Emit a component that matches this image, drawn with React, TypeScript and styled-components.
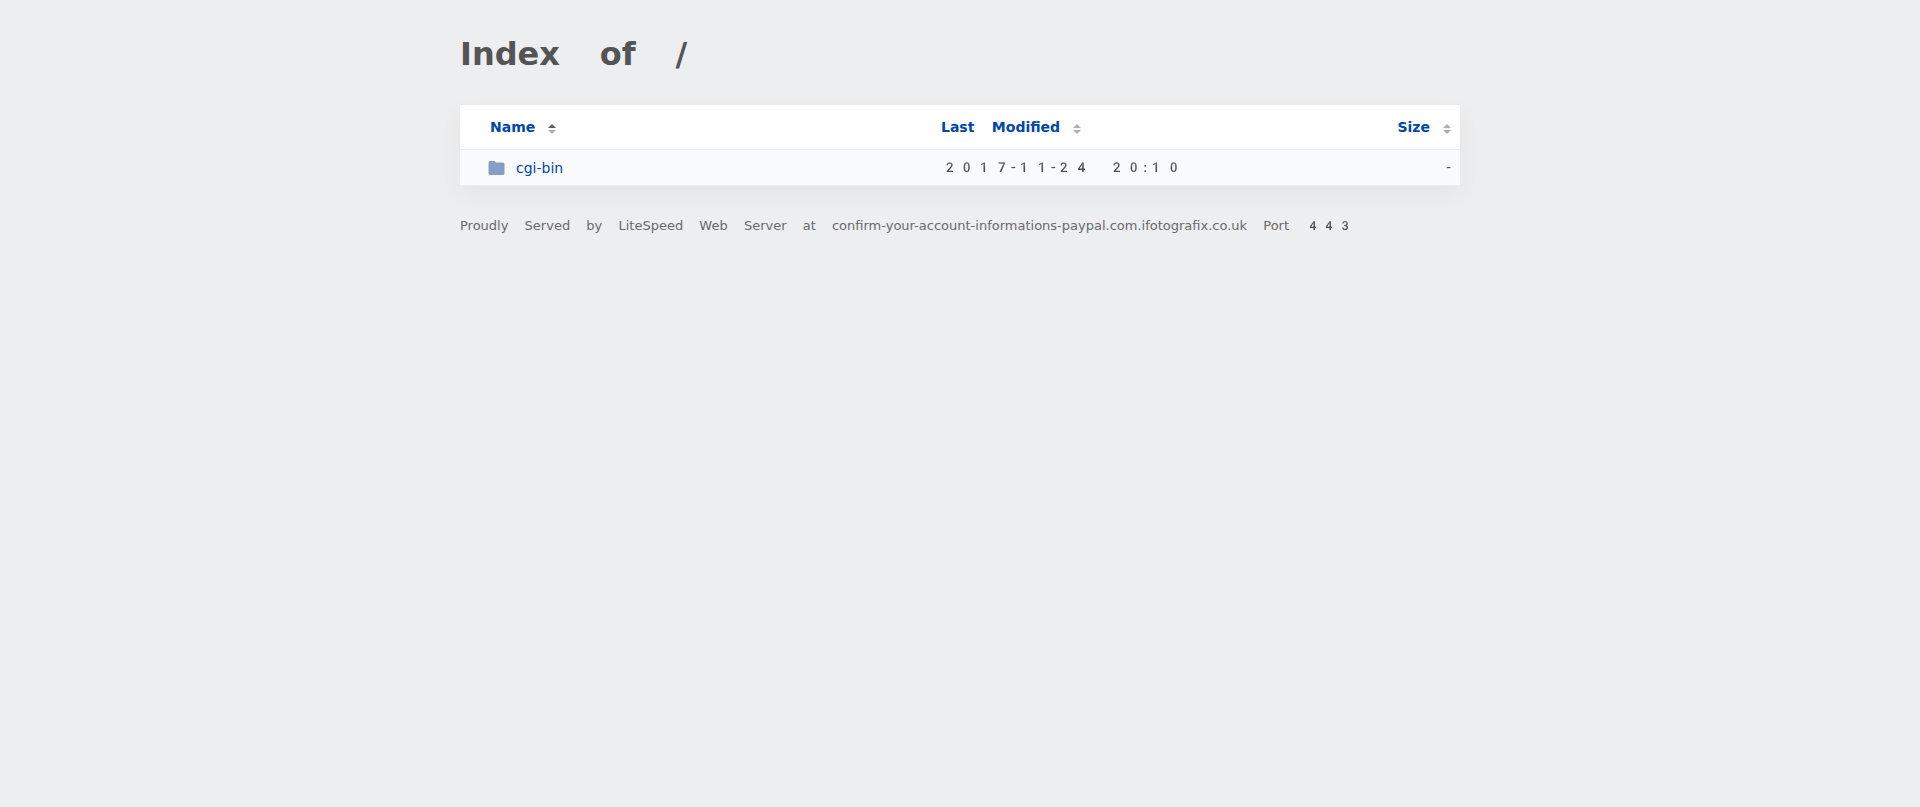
import React from "react";
import styled, { createGlobalStyle } from "styled-components";

const GlobalStyle = createGlobalStyle`
  body {
    margin: 0;
    background: #edeef0;
    color: #545454;
    font-family: "Noto Color Emoji", "DejaVu Sans", sans-serif;
    font-size: 14px;
    line-height: 20px;
  }
`;

const Page = styled.main`
  box-sizing: border-box;
  max-width: 1032px;
  margin: 0 auto;
  padding: 33px 16px;
`;

const Title = styled.h1`
  margin: 0 0 29px;
  font-size: 32px;
  line-height: 43px;
  font-weight: 700;
`;

const Listing = styled.table`
  width: 100%;
  table-layout: fixed;
  border-collapse: separate;
  border-spacing: 0;
  background: #fff;
  box-shadow: 0 8px 20px rgba(0, 54, 46, 0.05);
`;

const NameColumn = styled.col`
  width: 47%;
`;

const HeadCell = styled.th<{ $align?: "right"; $indent?: boolean }>`
  padding: 12px 9px 12px ${(p) => (p.$indent ? "30px" : "11px")};
  border-bottom: 1px solid #e9ecef;
  text-align: ${(p) => p.$align ?? "left"};
`;

const SortLink = styled.a`
  display: inline-flex;
  align-items: center;
  gap: 13px;
  color: #0047ab;
  text-decoration: none;

  svg {
    margin-top: 3px;
  }
`;

const Cell = styled.td<{ $align?: "right"; $indent?: boolean }>`
  padding: 7px 9px 7px ${(p) => (p.$indent ? "28px" : "11px")};
  background: #f9fafc;
  border-bottom: 1px solid #e9ecef;
  text-align: ${(p) => p.$align ?? "left"};
  vertical-align: top;
`;

const FileLink = styled.a`
  display: flex;
  align-items: center;
  gap: 11px;
  padding-top: 1px;
  color: #0047ab;
  text-decoration: none;
`;

const Footer = styled.footer`
  margin-top: 30px;
  color: #6a6a6a;
  font-size: 13px;
`;

const SortIcon = ({ active }: { active?: boolean }) => (
  <svg width="8" height="10" viewBox="0 0 8 10" aria-hidden="true">
    <path d="M4 0 8 4H0Z" fill={active ? "#5c5c5c" : "#b0b0b0"} />
    <path d="M4 10 8 6H0Z" fill="#b0b0b0" />
  </svg>
);

const FolderIcon = () => (
  <svg width="17" height="16" viewBox="0 0 17 16" aria-hidden="true">
    <path
      d="M2 1H6.200Q7 1 7.400 1.800L7.900 2.600H15Q16.500 2.600 16.500 4.200V13.400Q16.500 15 15 15H2Q.5 15 .5 13.400V2.600Q.5 1 2 1Z"
      fill="#839fc6"
    />
  </svg>
);

export default function App() {
  return (
    <>
      <GlobalStyle />
      <Page>
        <Title>Index of /</Title>
        <Listing>
          <colgroup>
            <NameColumn />
            <col />
            <col />
          </colgroup>
          <thead>
            <tr>
              <HeadCell $indent aria-sort="ascending">
                <SortLink href="#name">
                  Name <SortIcon active />
                </SortLink>
              </HeadCell>
              <HeadCell>
                <SortLink href="#modified">
                  Last Modified <SortIcon />
                </SortLink>
              </HeadCell>
              <HeadCell $align="right">
                <SortLink href="#size">
                  Size <SortIcon />
                </SortLink>
              </HeadCell>
            </tr>
          </thead>
          <tbody>
            <tr>
              <Cell $indent>
                <FileLink href="#cgi-bin">
                  <FolderIcon />
                  cgi-bin
                </FileLink>
              </Cell>
              <Cell>2017-11-24 20:10</Cell>
              <Cell $align="right">-</Cell>
            </tr>
          </tbody>
        </Listing>
        <Footer>
          Proudly Served by LiteSpeed Web Server at confirm-your-account-informations-paypal.com.ifotografix.co.uk Port 443
        </Footer>
      </Page>
    </>
  );
}
